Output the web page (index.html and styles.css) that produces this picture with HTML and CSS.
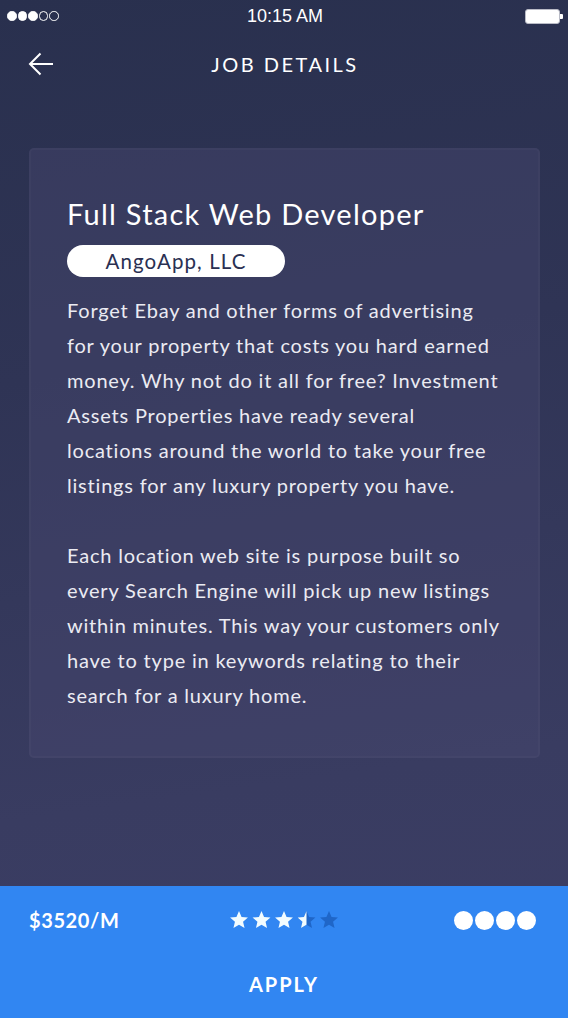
FILE: index.html
```html
<!DOCTYPE html>
<html>
<head>
<meta charset="utf-8">
<link rel="stylesheet" href="styles.css">
</head>
<body>
<div class="screen">
  <div class="status">
    <div class="signal">
      <span class="dot on"></span><span class="dot on"></span><span class="dot on"></span><span class="dot"></span><span class="dot"></span>
    </div>
    <div class="time">10:15 AM</div>
    <div class="battery"><span class="batt-body"></span><span class="batt-tip"></span></div>
  </div>

  <header class="nav">
    <svg class="back" width="26" height="24" viewBox="0 0 26 24"><path d="M25 12H2M12.5 1.5L2 12l10.5 10.5" fill="none" stroke="#fff" stroke-width="2"/></svg>
    <h1 class="nav-title">JOB DETAILS</h1>
  </header>

  <main class="content">
    <section class="card">
      <h2 class="job-title">Full Stack Web Developer</h2>
      <span class="company">AngoApp, LLC</span>
      <p class="desc">Forget Ebay and other forms of advertising for your property that costs you hard earned money. Why not do it all for free? Investment Assets Properties have ready several locations around the world to take your free listings for any luxury property you have.</p>
      <p class="desc">Each location web site is purpose built so every Search Engine will pick up new listings within minutes. This way your customers only have to type in keywords relating to their search for a luxury home.</p>
    </section>
  </main>

  <footer class="footer">
    <div class="meta">
      <span class="price">$3520/M</span>
      <svg class="stars" width="110" height="20" viewBox="0 0 110 20">
        <defs>
          <path id="st" d="M9 0.1l2.55 5.9 6.4 0.6-4.9 4.2 1.5 6.25L9 13.8 3.45 17.05l1.5-6.25L0.05 6.6l6.4-0.6z"/>
          <clipPath id="half"><rect x="0" y="0" width="9" height="20"/></clipPath>
        </defs>
        <use href="#st" x="0" y="1" fill="#f2fcff"/>
        <use href="#st" x="22.5" y="1" fill="#f2fcff"/>
        <use href="#st" x="45" y="1" fill="#f2fcff"/>
        <use href="#st" x="67.5" y="1" fill="#1f66c8"/>
        <use href="#st" x="67.5" y="1" fill="#f2fcff" clip-path="url(#half)"/>
        <use href="#st" x="90" y="1" fill="#1f66c8"/>
      </svg>
      <div class="pager"><span></span><span></span><span></span><span></span></div>
    </div>
    <div class="apply">APPLY</div>
  </footer>
</div>
</body>
</html>
```

FILE: styles.css
```css
* { box-sizing: border-box; }
html, body { margin: 0; padding: 0; }
body {
  width: 568px;
  height: 1018px;
  overflow: hidden;
  font-family: Lato, "Noto Sans", sans-serif;
  color: #fff;
}
.screen {
  height: 1018px;
  display: flex;
  flex-direction: column;
  background: linear-gradient(172deg, #29304e 0%, #2f3455 35%, #393c61 75%, #3c3e65 100%);
}
.status {
  height: 34px;
  display: flex;
  align-items: center;
  justify-content: space-between;
  padding: 0 5px 2px 7px;
  font-family: "Liberation Sans", Arial, sans-serif;
}
.signal { display: flex; gap: 1px; width: 80px; }
.dot {
  width: 9.5px; height: 9.5px; border-radius: 50%;
  border: 1px solid #fff;
}
.dot.on { background: #fff; }
.time { font-size: 18px; letter-spacing: 0; }
.battery { width: 80px; display: flex; justify-content: flex-end; align-items: center; }
.batt-body {
  width: 35px; height: 15px; border: 1px solid #b9bbc6; border-radius: 3px;
  background: #fff; box-shadow: inset 0 0 0 1px #fff;
}
.batt-tip { width: 3px; height: 5px; background: #fff; border-radius: 0 1px 1px 0; }

.nav {
  height: 60px;
  display: flex;
  align-items: center;
  position: relative;
  padding-left: 28px;
}
.back { display: block; }
.nav-title {
  position: absolute; left: 0; right: 0; text-align: center;
  margin: 0; font-size: 20px; font-weight: 400; letter-spacing: 2.5px;
  padding-left: 2px;
  pointer-events: none;
}

.content { flex: 1; padding: 54px 28px 0 29px; }
.card {
  background: rgba(70, 72, 110, 0.45);
  border: 2px solid rgba(255, 255, 255, 0.025);
  border-radius: 5px;
  height: 610px;
  padding: 44px 18px 0 36px;
}
.job-title {
  margin: 0; font-size: 29px; font-weight: 400; line-height: 40px; letter-spacing: 1.25px;
}
.company {
  display: inline-block;
  margin-top: 11px;
  height: 32px; width: 218px;
  border-radius: 16px;
  background: #fff;
  color: #2a3052;
  text-align: center;
  font-size: 20.5px; line-height: 32px; letter-spacing: 1.1px;
}
.desc {
  margin: 16px 0 35px;
  width: 434px;
  font-size: 20px; line-height: 35px; letter-spacing: 0.8px;
  color: #ebebf2;
}
.desc + .desc { margin-top: 0; }

.footer {
  height: 132px;
  background: #3186f2;
  display: flex; flex-direction: column;
}
.meta {
  height: 68px;
  display: flex; align-items: center; justify-content: space-between;
  padding: 0 32px 0 29px;
}
.price { font-size: 20px; font-weight: 700; width: 140px; letter-spacing: 0.6px; }
.stars { display: block; margin-right: 53px; }
.pager { display: flex; gap: 2px; }
.pager span { width: 19px; height: 19px; border-radius: 50%; background: #fff; }
.apply {
  flex: 1; display: flex; align-items: center; justify-content: center;
  font-size: 20px; letter-spacing: 2px; font-weight: 700; padding-bottom: 4px;
}
```
